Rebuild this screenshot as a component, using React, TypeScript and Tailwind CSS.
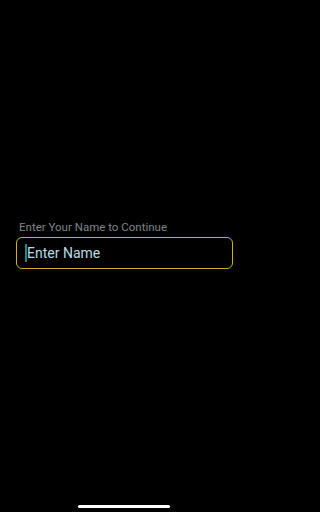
export default function App() {
  return (
    <div
      className="relative flex h-[512px] w-full min-w-[249px] flex-col bg-black px-4"
      style={{ fontFamily: "Roboto, 'Noto Sans', sans-serif" }}
    >
      <div className="mt-[219px] pl-[3px] text-[11.5px] leading-[16px] text-[#7d848a]">
        Enter Your Name to Continue
      </div>
      <div className="mt-[2px] flex h-[32px] w-[217px] items-center rounded-[6px] border-[1.5px] border-[#d1ad2e] pl-[8px]">
        <span className="h-[18px] w-[2px] bg-[#1f8a84]" />
        <span className="text-[14px] leading-[20px] text-[#b9dde3]">Enter Name</span>
      </div>
      <div className="absolute bottom-[4px] left-[78px] h-[3px] w-[92px] rounded-full bg-white" />
    </div>
  );
}
